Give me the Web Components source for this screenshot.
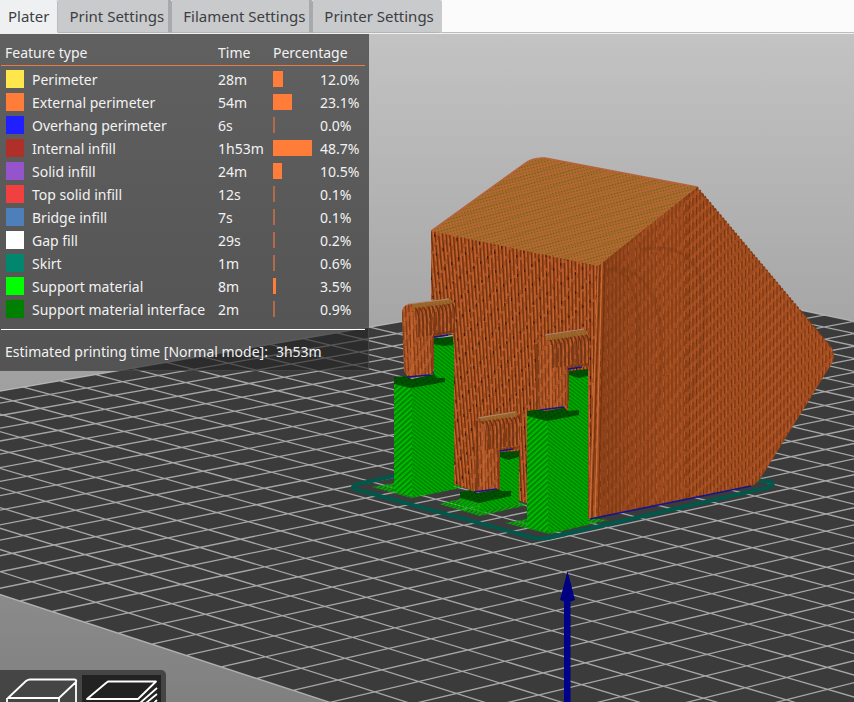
<!DOCTYPE html>
<html lang="en">
<head>
<meta charset="utf-8">
<title>Plater</title>
<style>
  html, body { margin: 0; height: 100%; }
  body { font-family: "Noto Sans", "Open Sans", sans-serif; font-size: 14px; overflow: hidden; background: #c4c4c4; }
</style>
</head>
<body>
<slicer-app>
  <slicer-tabs slot="tabs">
    <slicer-tab selected>Plater</slicer-tab>
    <slicer-tab>Print Settings</slicer-tab>
    <slicer-tab>Filament Settings</slicer-tab>
    <slicer-tab>Printer Settings</slicer-tab>
  </slicer-tabs>
  <bed-scene></bed-scene>
  <feature-legend slot="legend"></feature-legend>
  <view-switch slot="views"></view-switch>
</slicer-app>

<script>
function shadow(host, html) {
  const root = host.attachShadow({ mode: 'open' });
  root.innerHTML = html;
  return root;
}

customElements.define('slicer-app', class extends HTMLElement {
  constructor() {
    super();
    shadow(this, `<style>
      :host { display: flex; flex-direction: column; height: 100vh; }
      main { flex: 1; min-height: 0; position: relative; overflow: hidden; }
      .legend { position: absolute; left: 0; top: 0; }
      .views { position: absolute; left: 0; bottom: 0; }
    </style>
    <slot name="tabs"></slot>
    <main><slot></slot>
      <div class="legend"><slot name="legend"></slot></div>
      <div class="views"><slot name="views"></slot></div>
    </main>`);
  }
});

customElements.define('slicer-tabs', class extends HTMLElement {
  constructor() {
    super();
    shadow(this, `<style>
      :host { display: block; background: #eff0f1; padding-bottom: 1px; }
      nav { display: flex; height: 33px; background: #fbfbfb; box-shadow: inset 0 -1px #bcbdbe; }
    </style><nav role="tablist"><slot></slot></nav>`);
  }
});

customElements.define('slicer-tab', class extends HTMLElement {
  constructor() {
    super();
    shadow(this, `<style>
      :host { display: flex; }
      button { font: inherit; font-size: 15px; line-height: 20px; color: #3b3f44; border: 0; margin: 0; cursor: pointer;
        padding: 0 4px 0 11px; background: #c9cacb; border-right: 4px solid #a8a9aa;
        border-bottom: 1px solid #b4b5b6; border-radius: 0 2px 0 0; white-space: nowrap; }
      :host(:last-child) button { border-right-color: #c9cacb; }
      :host([selected]) button { background: #eff0f1; padding: 0 8px 1px 8px; border-right: 1px solid #bcbdbe; border-bottom-color: #eff0f1; }
    </style><button type="button" role="tab"><slot></slot></button>`)
      .querySelector('button').setAttribute('aria-selected', this.hasAttribute('selected'));
  }
});

const FEATURES = [
  ['#ffe64d', 'Perimeter', '28m', 10, '12.0%'],
  ['#ff7d38', 'External perimeter', '54m', 19, '23.1%'],
  ['#1f1fff', 'Overhang perimeter', '6s', 2, '0.0%'],
  ['#b03029', 'Internal infill', '1h53m', 39, '48.7%'],
  ['#9654cc', 'Solid infill', '24m', 9, '10.5%'],
  ['#f04040', 'Top solid infill', '12s', 2, '0.1%'],
  ['#4d80ba', 'Bridge infill', '7s', 2, '0.1%'],
  ['#ffffff', 'Gap fill', '29s', 2, '0.2%'],
  ['#00876e', 'Skirt', '1m', 2, '0.6%'],
  ['#00ff00', 'Support material', '8m', 3, '3.5%'],
  ['#008000', 'Support material interface', '2m', 2, '0.9%']
];

customElements.define('feature-legend', class extends HTMLElement {
  constructor() {
    super();
    const rows = FEATURES.map(([color, name, time, width, share]) => `<tr>
      <td><i class="swatch" style="background:${color}"></i></td><td>${name}</td><td>${time}</td>
      <td><i class="bar${width < 3 ? ' thin' : ''}" style="width:${width}px"></i></td><td>${share}</td></tr>`).join('');
    shadow(this, `<style>
      :host { display: block; box-sizing: border-box; width: 369px; padding: 9px 3px 8px 1px; color: #f2f2f2;
        background: rgba(36,36,36,.62); border: 1px solid rgba(90,90,105,.5); border-width: 0 1px 1px 0; line-height: 20px; }
      table { border-collapse: collapse; table-layout: fixed; width: 364px; }
      th { font-weight: 400; text-align: left; vertical-align: top; padding: 0; height: 22px; border-bottom: 1px solid #e87a42; white-space: nowrap; }
      th:first-child { padding-left: 4px; }
      td { padding: 0; height: 23px; white-space: nowrap; }
      td:first-child { padding-left: 5px; }
      i { display: block; }
      .swatch { width: 18px; height: 18px; margin-bottom: 2px; }
      .bar { height: 16px; margin-bottom: 2px; background: #ff7d38; }
      .thin { background: #b26a49; }
      tbody::before { content: ""; display: block; height: 2px; }
      p { margin: 8px 0 0; padding: 12px 4px 0; border-top: 1px solid #fff; display: flex; gap: 8px; width: 356px; }
    </style>
    <table>
      <colgroup><col style="width:31px"><col style="width:186px"><col style="width:55px"><col style="width:47px"><col></colgroup>
      <thead><tr><th colspan="2">Feature type</th><th>Time</th><th colspan="2">Percentage</th></tr></thead>
      <tbody>${rows}</tbody>
    </table>
    <p><span>Estimated printing time [Normal mode]:</span><span>3h53m</span></p>`);
  }
});

customElements.define('view-switch', class extends HTMLElement {
  constructor() {
    super();
    shadow(this, `<style>
      :host { display: flex; gap: 4px; height: 32px; overflow: hidden; background: #454545;
        border-radius: 0 5px 0 0; box-sizing: border-box; padding: 5px 5px 0 0; }
      button { border: 0; padding: 0; margin: 0; background: none; width: 78px; height: 60px; display: block; }
      button[aria-pressed=true] { background: #222; width: 79px; }
      svg { display: block; width: 79px; height: 60px; fill: none; stroke: #fff; stroke-width: 1.8; stroke-linejoin: round; }
    </style>
    <button type="button" aria-label="3D editor view" aria-pressed="false"><svg viewBox="0 0 79 60">
      <path d="M8 23 26 6Q28 4.500 30 4.500H74Q77 4.500 76 7L59 23ZM76 5V36L59 54H7V23M59 23V54"/></svg></button>
    <button type="button" aria-label="Preview" aria-pressed="true"><svg viewBox="0 0 79 60">
      <path d="M5 24 24 8 26 6.500H74L56 24ZM58 28 75 13M64 28 75 19M70 30 75 25"/></svg></button>`);
  }
});

/* Known bed nodes (column, row, x, y) from which the camera's plane projection is fitted. */
const NODES = [
  [15, 0, 20.7, 601], [24, 0, 330, 702], [15, 9, 391.7, 524.3], [14, 1, 30.7, 582],
  [0, 11, 23.3, 387.3], [0, 13, 96, 374.3], [6, 30, 824, 315], [29, 7, 827.3, 689.3],
  [17, 19, 825.3, 465], [9, 5, 45.3, 501.3], [23, 13, 827, 567.3]
];
function fitProjection(nodes) {
  const rows = [];
  for (const [u, v, x, y] of nodes) {
    rows.push([u, v, 1, 0, 0, 0, -u * x / 700, -v * x / 700, x]);
    rows.push([0, 0, 0, u, v, 1, -u * y / 700, -v * y / 700, y]);
  }
  const n = 8, m = Array.from({ length: n }, (_, i) =>
    Array.from({ length: n + 1 }, (_, j) => rows.reduce((s, r) => s + r[i] * r[j], 0)));
  for (let c = 0; c < n; c++) {
    let p = c;
    for (let r = c; r < n; r++) if (Math.abs(m[r][c]) > Math.abs(m[p][c])) p = r;
    [m[c], m[p]] = [m[p], m[c]];
    for (let r = 0; r < n; r++) if (r !== c) {
      const f = m[r][c] / m[c][c];
      for (let k = c; k <= n; k++) m[r][k] -= f * m[c][k];
    }
  }
  const h = m.map((r, i) => r[n] / r[i]);
  return (u, v) => {
    const w = h[6] / 700 * u + h[7] / 700 * v + 1;
    return ((h[0] * u + h[1] * v + h[2]) / w).toFixed(2) + ' ' + ((h[3] * u + h[4] * v + h[5]) / w).toFixed(2);
  };
}

/* Broken vertical strands of extruded plastic over a box, shifted column by column. */
function strands(x0, x1, y0, y1, step, dash, gap, shift, lean, curve = 0) {
  let d = '';
  for (let x = x0, i = 0; x < x1; x += step, i++) {
    const period = dash + gap;
    const tilt = lean * Math.max(0, (x1 - x) / (x1 - x0));
    const phase = ((i * shift + Math.pow((x - x0) / 20, 2) * curve) % period + period) % period;
    for (let y = y0 - phase; y < y1; y += period)
      d += `M${(x + (y - y0) * tilt).toFixed(1)} ${y.toFixed(1)}l${(dash * tilt).toFixed(1)} ${dash}`;
  }
  return d;
}

customElements.define('bed-scene', class extends HTMLElement {
  constructor() {
    super();
    const at = fitProjection(NODES);
    let grid = '';
    for (let i = 0; i <= 30; i++) grid += `M${at(i, 0)}L${at(i, 30)}M${at(0, i)}L${at(30, i)}`;
    const BED = `M${at(0, 0)}L${at(30, 0)}L${at(30, 30)}L${at(0, 30)}Z`;
    const TOP = 'M431 231 524 164Q533 157 545 158L697 187 598 266Z';
    const LEFT = 'M431 230 598 265 588 519 526 503 520 501 474 491 453 484V306L431 300Z';
    const RIGHT = 'M598 265 697 187 831 347Q836 355 832 363L760 479Q756 485 750 486L588 519Z';
    const ARMS = [
      'M402 313Q402 305 410 304L450 299 455 303V333L434 337V368Q433 374 427 375L412 378Q405 376 404 370Z',
      'M476 422Q477 417 484 416L516 411 520 415V449L500 452V484Q499 490 494 490L476 492 471 488Z',
      'M536 345Q538 337 545 335L584 329 589 333V366L569 369V400Q567 406 562 408L545 411 536 409Z'
    ];
    /* Bent strands that run over the shoulder of an arm and down its side. */
    const shoulder = (x, y, w) => {
      let d = '';
      for (let i = 0; i < w; i += 4)
        d += `M${x + i} ${(y - i * .15).toFixed(1)}q5 3 5 14v16`;
      return d;
    };
    shadow(this, `<style>
      :host { display: block; width: 100%; height: 100%; }
      svg { display: block; width: 100%; height: 100%; }
    </style>
    <svg viewBox="0 34 854 668" preserveAspectRatio="xMidYMid slice" role="img" aria-label="Sliced model on the print bed">
      <defs>
        <linearGradient id="sky" x1="0" y1="0" x2="0" y2="1"><stop offset="0" stop-color="#c3c3c3"/><stop offset="1" stop-color="#808080"/></linearGradient>
        <linearGradient id="corner" x1="0" x2="1" y1="0" y2="0"><stop offset="0" stop-color="#6b3010" stop-opacity=".35"/><stop offset=".3" stop-color="#8a3f18" stop-opacity=".1"/><stop offset="1" stop-color="#c2602a" stop-opacity=".12"/></linearGradient>
        <pattern id="roof" width="3" height="3" patternUnits="userSpaceOnUse" patternTransform="rotate(-14)">
          <rect width="3" height="3" fill="#b36c2b"/><rect width="1.2" height="1.2" fill="#7d4a22"/><rect x="1.5" y="1.5" width="1.2" height="1" fill="#8f7430"/>
        </pattern>
        <pattern id="sheen" width="60" height="9" patternUnits="userSpaceOnUse" patternTransform="rotate(-18)">
          <rect y="1" width="60" height="2" fill="#b9603f" fill-opacity=".35"/><rect y="5" width="60" height="1" fill="#6d5a20" fill-opacity=".25"/>
        </pattern>
        <pattern id="weaveL" width="4" height="4" patternUnits="userSpaceOnUse" patternTransform="rotate(-42)">
          <rect width="4" height="4" fill="#00b800"/><rect width="4" height="1.4" fill="#007200"/>
        </pattern>
        <pattern id="weaveR" width="4" height="3" patternUnits="userSpaceOnUse" patternTransform="rotate(38)">
          <rect width="4" height="3" fill="#00a800"/><rect width="4" height="1" fill="#007a00"/>
        </pattern>
        <pattern id="raft" width="3" height="3" patternUnits="userSpaceOnUse" patternTransform="rotate(-35)">
          <rect width="3" height="2.2" fill="#00aa00"/>
        </pattern>
        <pattern id="cap" width="4" height="4" patternUnits="userSpaceOnUse" patternTransform="rotate(-30)">
          <rect width="4" height="4" fill="#005200"/><rect width="2" height="1.5" fill="#003c00"/>
        </pattern>
        <clipPath id="cl"><path d="${LEFT}"/></clipPath>
        <clipPath id="cr"><path d="${RIGHT}"/></clipPath>
        <clipPath id="ca"><path d="${ARMS.join('')}"/></clipPath>
      </defs>
      <rect y="34" width="854" height="668" fill="url(#sky)"/>
      <path d="${BED}" fill="#3b3b3b"/>
      <path d="${grid}" fill="none" stroke="#c4c4c4" stroke-opacity=".78" stroke-width="1.3"/>

      <path d="M430 468 358 484Q348 487 358 490L530 537Q540 540 552 537L766 488Q776 485 771 482L756 480" fill="none" stroke="#00574a" stroke-width="4" stroke-linejoin="round"/>
      <path d="M372 487 394 483 453 484 465 487 412 498ZM439 504 460 499 519 502 527 505 480 516ZM505 523 527 519 588 518 608 520 550 534Z" fill="url(#raft)"/>

      <g clip-path="url(#cl)" fill="none">
        <rect x="425" y="220" width="180" height="310" fill="#a85024"/>
        <path d="${strands(412, 600, 225, 530, 3.7, 34, 3, 9, .1)}" stroke="#71330f" stroke-width="1.3"/>
        <path d="${strands(414, 602, 225, 530, 3.7, 14, 5, 7, .1)}" stroke="#c8662f" stroke-width="1"/>
        <path d="${strands(412, 600, 230, 530, 7.4, 3, 16, 5, .1)}" stroke="#3e1d0c" stroke-width="1.1"/>
      </g>
      <g clip-path="url(#cr)" fill="none">
        <rect x="580" y="180" width="260" height="345" fill="#9f4b20"/>
        <path d="${strands(588, 690, 180, 525, 4, 30, 5, 6, 0)}" stroke="#7a390f" stroke-width="1.1"/>
        <path d="${strands(686, 840, 180, 525, 3.5, 8, 4, 3, 0, .35)}" stroke="#73350f" stroke-width="1.1"/>
        <path d="${strands(590, 840, 184, 525, 3.5, 6, 6, 3, 0, .35)}" stroke="#b85a28" stroke-width="1"/>
        <rect x="600" y="180" width="240" height="345" fill="url(#corner)"/>
        <path d="M598 262 590 519M602 262 595 519" stroke="#cd6d35" stroke-width="1.3"/>
        <path d="M600 262 592 519M605 262 598 519" stroke="#74340f" stroke-width="1.2"/>
        <path d="M604 270Q650 262 634 380M612 268Q680 270 655 420M640 250Q735 230 690 400" stroke="#6b3010" stroke-width="3" stroke-opacity=".22"/>
      </g>
      <path d="${TOP}" fill="url(#roof)"/>
      <path d="${TOP}" fill="url(#sheen)"/>
      <path d="M431 231 524 164Q533 157 545 158L697 187" fill="none" stroke="#b5633d" stroke-width="1.4"/>
      <path d="M697 187 831 347" stroke="#7d3c14" stroke-width="1.5" stroke-dasharray="2 2"/>
      <path d="M590 519 751 486" stroke="#15158c" stroke-width="1.6"/>

      <path d="M394 380 412 385V497L394 491Z" fill="url(#weaveL)"/>
      <path d="M412 385 434 380V342L454 341V489L412 497Z" fill="url(#weaveR)"/>
      <path d="M460 496 480 500V512L460 506Z" fill="url(#raft)"/>
      <path d="M500 456 519 454V504L480 512V500L500 492Z" fill="url(#weaveR)"/>
      <path d="M527 414 548 419V533L527 527Z" fill="url(#weaveL)"/>
      <path d="M548 419 568 412 569 374 588 372V524L548 533Z" fill="url(#weaveR)"/>
      <path d="M394 377 405 376 412 379 434 374 437 378H445V382L411 388 394 384ZM434 338 453 337V345L443 346 434 344ZM460 492 470 490 478 493 498 489 502 491H511V496L479 503 460 498ZM500 452 519 451V457L508 460 500 457ZM527 411 540 409 545 411 564 407 568 411 579 410V415L547 421 527 416ZM569 371 588 369V376L579 378 569 375Z" fill="url(#cap)"/>

      <g clip-path="url(#ca)" fill="none">
        <rect x="398" y="295" width="200" height="200" fill="#a95225"/>
        <path d="${strands(398, 596, 295, 495, 3.4, 14, 4, 5, .05)}" stroke="#7c3a17" stroke-width="1.1"/>
        <path d="${strands(400, 598, 295, 495, 3.4, 8, 6, 5, .05)}" stroke="#c5652f" stroke-width="1"/>
        <path d="${shoulder(414, 307, 40)}${shoulder(480, 420, 40)}${shoulder(548, 338, 40)}" stroke="#6b3010" stroke-width="1.4"/>
        <path d="M412 306 452 301M480 419 517 414M547 338 587 332" stroke="#9a6a2c" stroke-width="5" stroke-opacity=".8"/>
        <path d="M537 344V410M477 421V492" stroke="#5c290e" stroke-width="1.6" stroke-opacity=".7"/>
        <path d="M551 345V410M484 424V492M412 312V378" stroke="#c96a33" stroke-width="2" stroke-opacity=".6"/>
        <path d="M568 366V410M499 450V490M433 336V375M568 367 590 364M499 450 522 447M433 335 456 331" stroke="#6b3010" stroke-width="2.500" stroke-opacity=".6"/>
      </g>
      <path d="M408 304 449 299M478 418 515 412M545 335 584 329" stroke="#a98a78" stroke-width="1"/>
      <path d="M407 377 430 375M434 337 448 335M474 492 497 489M500 451 513 449M540 410 564 407M568 369 582 367" stroke="#15158c" stroke-width="1.6"/>

      <path d="M564 600H570.500V702H564Z" fill="#00008b"/>
      <path d="M567.500 571 575 600Q567.500 603 560 600Z" fill="#000080"/>
    </svg>`);
  }
});
</script>
</body>
</html>
